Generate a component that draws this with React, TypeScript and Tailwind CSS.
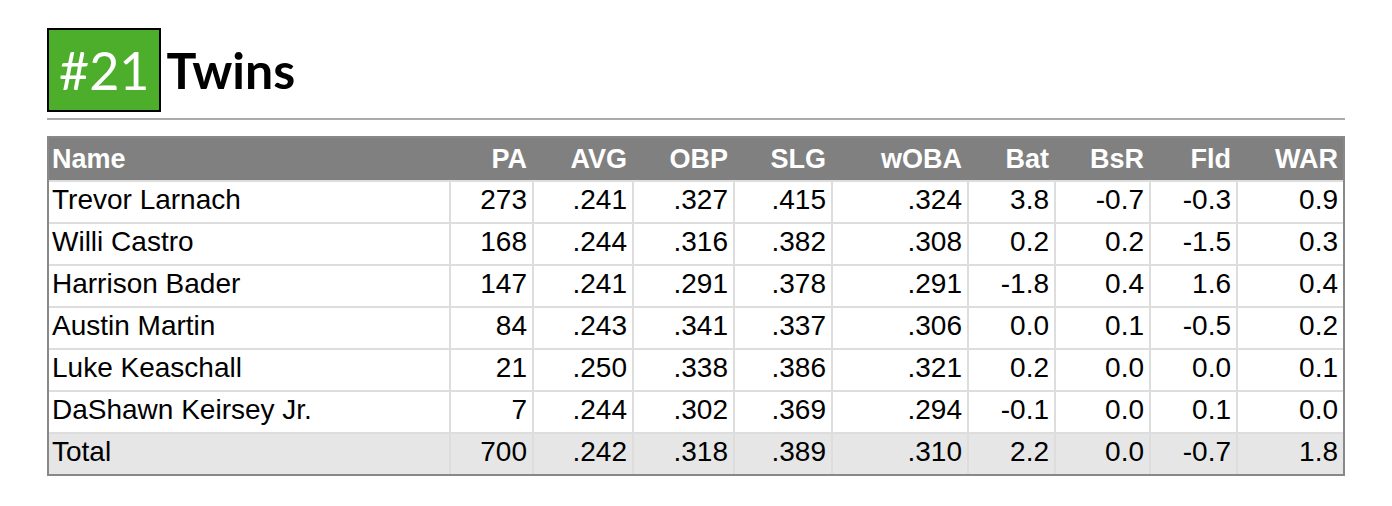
import React from "react";

type Row = { name: string; v: string[] };

const rows: Row[] = [
  { name: "Trevor Larnach", v: ["273", ".241", ".327", ".415", ".324", "3.8", "-0.7", "-0.3", "0.9"] },
  { name: "Willi Castro", v: ["168", ".244", ".316", ".382", ".308", "0.2", "0.2", "-1.5", "0.3"] },
  { name: "Harrison Bader", v: ["147", ".241", ".291", ".378", ".291", "-1.8", "0.4", "1.6", "0.4"] },
  { name: "Austin Martin", v: ["84", ".243", ".341", ".337", ".306", "0.0", "0.1", "-0.5", "0.2"] },
  { name: "Luke Keaschall", v: ["21", ".250", ".338", ".386", ".321", "0.2", "0.0", "0.0", "0.1"] },
  { name: "DaShawn Keirsey Jr.", v: ["7", ".244", ".302", ".369", ".294", "-0.1", "0.0", "0.1", "0.0"] },
];

const total: Row = { name: "Total", v: ["700", ".242", ".318", ".389", ".310", "2.2", "0.0", "-0.7", "1.8"] };

const headers = ["PA", "AVG", "OBP", "SLG", "wOBA", "Bat", "BsR", "Fld", "WAR"];

export default function App() {
  return (
    <div className="min-h-[506px] bg-white px-[47px] pt-[28px]" style={{ fontFamily: '"Liberation Sans", Arial, sans-serif' }}>
      <div className="flex items-center gap-[5px] border-b-2 border-[#aaaaaa] pb-[6px]" style={{ fontFamily: 'Lato, "Noto Sans", sans-serif' }}>
        <div className="flex h-[84px] items-center border-2 border-black bg-[#4cae2a] px-[10px] text-[52px] leading-none text-white">
          #21
        </div>
        <div className="text-[50px] font-bold leading-none text-black">Twins</div>
      </div>
      <div className="mt-[16px] border-2 border-[#888888]">
        <table className="w-full table-fixed border-separate border-spacing-0 text-[28px] leading-none">
          <colgroup>
            <col className="w-[400px]" />
            <col className="w-[83px]" />
            <col className="w-[100px]" />
            <col className="w-[101px]" />
            <col className="w-[98px]" />
            <col className="w-[136px]" />
            <col className="w-[87px]" />
            <col className="w-[95px]" />
            <col className="w-[87px]" />
            <col className="w-[107px]" />
          </colgroup>
          <thead>
            <tr className="h-[42px] bg-[#808080] text-[27px] text-white">
              <th className="px-[3px] pt-[1px] text-left font-bold">Name</th>
              {headers.map((h) => (
                <th key={h} className="px-[5px] pt-[1px] text-right font-bold">
                  {h}
                </th>
              ))}
            </tr>
          </thead>
          <tbody>
            {[...rows, total].map((r) => {
              const isTotal = r.name === "Total";
              return (
                <tr key={r.name} className={isTotal ? "h-[42px] bg-[#e6e6e6] text-black" : "h-[42px] bg-white text-black"}>
                  <td className="border-t-2 border-[#dddddd] px-[3px] pb-[4px] text-left">{r.name}</td>
                  {r.v.map((x, i) => (
                    <td key={i} className="border-l-2 border-t-2 border-[#dddddd] px-[5px] pb-[4px] text-right">
                      {x}
                    </td>
                  ))}
                </tr>
              );
            })}
          </tbody>
        </table>
      </div>
    </div>
  );
}
